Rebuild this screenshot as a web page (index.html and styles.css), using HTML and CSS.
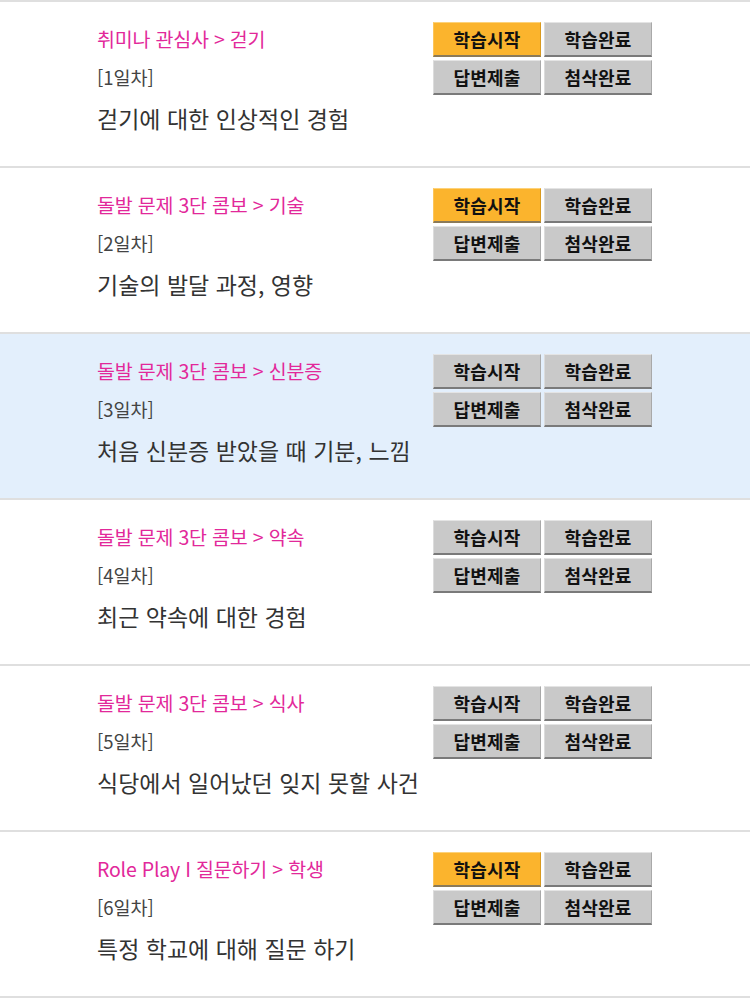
FILE: index.html
```html
<!DOCTYPE html>
<html lang="ko">
<head>
<meta charset="utf-8">
<link rel="stylesheet" href="styles.css">
</head>
<body>
<ul class="list">
  <li class="row">
    <div class="info">
      <div class="title">취미나 관심사 &gt; 걷기</div>
      <div class="day">[1일차]</div>
      <div class="desc">걷기에 대한 인상적인 경험</div>
    </div>
    <div class="btns">
      <span class="btn on">학습시작</span><span class="btn">학습완료</span>
      <span class="btn">답변제출</span><span class="btn">첨삭완료</span>
    </div>
  </li>
  <li class="row">
    <div class="info">
      <div class="title">돌발 문제 3단 콤보 &gt; 기술</div>
      <div class="day">[2일차]</div>
      <div class="desc">기술의 발달 과정, 영향</div>
    </div>
    <div class="btns">
      <span class="btn on">학습시작</span><span class="btn">학습완료</span>
      <span class="btn">답변제출</span><span class="btn">첨삭완료</span>
    </div>
  </li>
  <li class="row current">
    <div class="info">
      <div class="title">돌발 문제 3단 콤보 &gt; 신분증</div>
      <div class="day">[3일차]</div>
      <div class="desc">처음 신분증 받았을 때 기분, 느낌</div>
    </div>
    <div class="btns">
      <span class="btn">학습시작</span><span class="btn">학습완료</span>
      <span class="btn">답변제출</span><span class="btn">첨삭완료</span>
    </div>
  </li>
  <li class="row">
    <div class="info">
      <div class="title">돌발 문제 3단 콤보 &gt; 약속</div>
      <div class="day">[4일차]</div>
      <div class="desc">최근 약속에 대한 경험</div>
    </div>
    <div class="btns">
      <span class="btn">학습시작</span><span class="btn">학습완료</span>
      <span class="btn">답변제출</span><span class="btn">첨삭완료</span>
    </div>
  </li>
  <li class="row">
    <div class="info">
      <div class="title">돌발 문제 3단 콤보 &gt; 식사</div>
      <div class="day">[5일차]</div>
      <div class="desc">식당에서 일어났던 잊지 못할 사건</div>
    </div>
    <div class="btns">
      <span class="btn">학습시작</span><span class="btn">학습완료</span>
      <span class="btn">답변제출</span><span class="btn">첨삭완료</span>
    </div>
  </li>
  <li class="row last">
    <div class="info">
      <div class="title">Role Play I 질문하기 &gt; 학생</div>
      <div class="day">[6일차]</div>
      <div class="desc">특정 학교에 대해 질문 하기</div>
    </div>
    <div class="btns">
      <span class="btn on">학습시작</span><span class="btn">학습완료</span>
      <span class="btn">답변제출</span><span class="btn">첨삭완료</span>
    </div>
  </li>
</ul>
</body>
</html>
```
FILE: styles.css
```css
* { box-sizing: border-box; }
html, body {
  margin: 0;
  padding: 0;
  background: #ffffff;
}
body {
  font-family: "Noto Sans CJK KR", "Noto Sans", sans-serif;
  color: #333;
}
.list {
  list-style: none;
  margin: 0;
  padding: 0;
}
.row {
  display: flex;
  justify-content: space-between;
  align-items: flex-start;
  height: 166px;
  padding: 20px 98px 0 97px;
  border-top: 2px solid #dfdfdf;
  background: #fff;
}
.row.last {
  border-bottom: 2px solid #dfdfdf;
  height: 168px;
}
.row.current {
  background: #e3effc;
}
.info {
  padding-top: 4px;
}
.title {
  font-size: 19.5px;
  line-height: 26px;
  color: #e2289a;
  letter-spacing: -0.2px;
}
.day {
  margin-top: 12px;
  font-size: 18.5px;
  line-height: 26px;
  color: #444;
}
.desc {
  margin-top: 12px;
  font-size: 23px;
  line-height: 32px;
  color: #333;
  letter-spacing: 0;
}
.btns {
  display: grid;
  grid-template-columns: 108px 108px;
  grid-auto-rows: 35px;
  gap: 3px 3px;
}
.btn {
  display: flex;
  align-items: center;
  justify-content: center;
  background: #c9c9c9;
  border-top: 1px solid #e4e4e4;
  border-left: 1px solid #dcdcdc;
  border-right: 1px solid #a9a9a9;
  border-bottom: 2px solid #7a7a7a;
  font-size: 18px;
  font-weight: bold;
  color: #111;
  letter-spacing: 0.2px;
}
.btn.on {
  background: #fbb42d;
  border-top-color: #fdd27a;
  border-left-color: #fcc55a;
  border-right-color: #d99a20;
  border-bottom-color: #8a7a5a;
}
```
